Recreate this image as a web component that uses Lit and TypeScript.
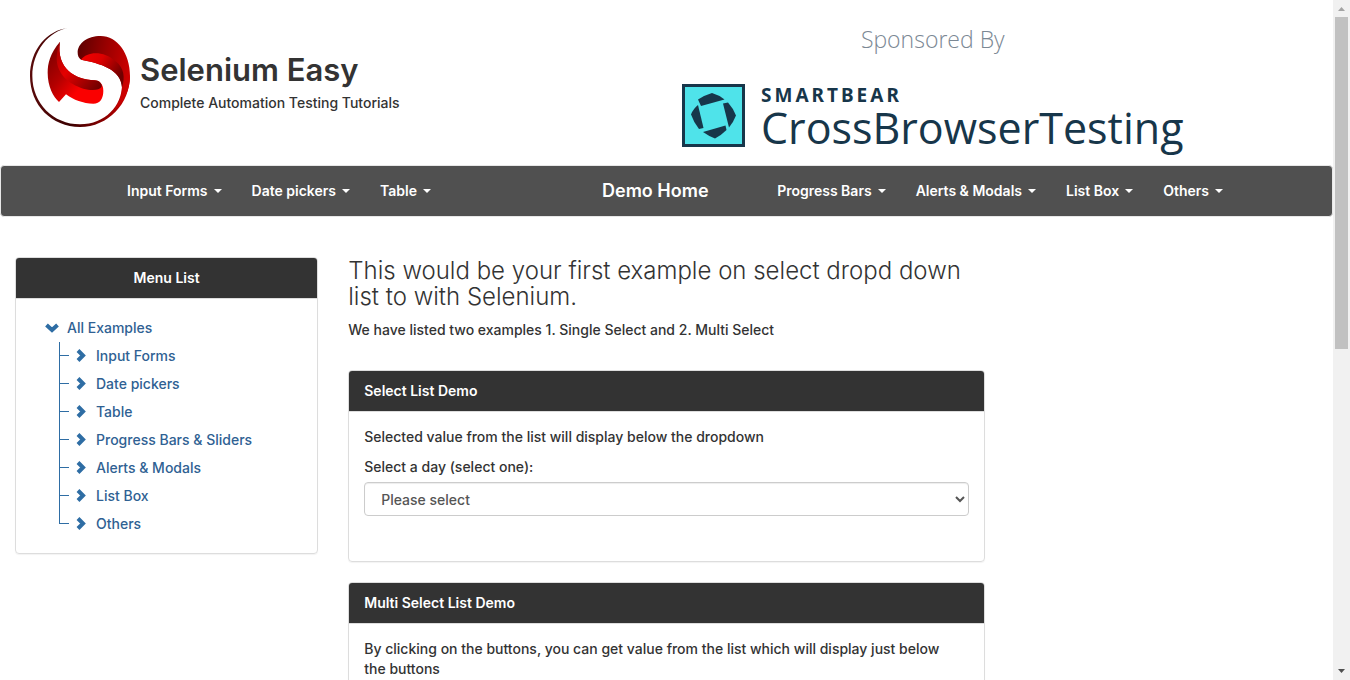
import { LitElement, html, css, svg } from "lit";
import { customElement, state } from "lit/decorators.js";

const NAV_LEFT = ["Input Forms", "Date pickers", "Table"];
const NAV_RIGHT = ["Progress Bars", "Alerts & Modals", "List Box", "Others"];
const TREE = [
  "Input Forms",
  "Date pickers",
  "Table",
  "Progress Bars & Sliders",
  "Alerts & Modals",
  "List Box",
  "Others",
];
const DAYS = ["Sunday", "Monday", "Tuesday", "Wednesday", "Thursday", "Friday", "Saturday"];

const seleniumLogo = html`
  <svg class="logo" viewBox="90 81 300 300" aria-hidden="true">
    <defs>
      <linearGradient id="ring" x1="0" y1="0" x2="1" y2="0">
        <stop offset="0" stop-color="#5a0a0a" />
        <stop offset="0.4" stop-color="#3a0000" />
        <stop offset="0.75" stop-color="#8c0000" />
        <stop offset="1" stop-color="#cf0000" />
      </linearGradient>
      <linearGradient id="cap" x1="0" y1="0.1" x2="1" y2="0.4">
        <stop offset="0" stop-color="#5c0000" />
        <stop offset="0.5" stop-color="#980000" />
        <stop offset="1" stop-color="#cc0000" />
      </linearGradient>
      <linearGradient id="fold" x1="0" y1="0" x2="1" y2="0.5">
        <stop offset="0" stop-color="#f40000" />
        <stop offset="0.45" stop-color="#dc0000" />
        <stop offset="1" stop-color="#700000" />
      </linearGradient>
      <linearGradient id="blade" x1="0" y1="0.2" x2="0.8" y2="0.9">
        <stop offset="0" stop-color="#800000" />
        <stop offset="0.4" stop-color="#b40000" />
        <stop offset="0.75" stop-color="#fa0000" />
      </linearGradient>
      <linearGradient id="inner" x1="0.1" y1="0.2" x2="1" y2="1">
        <stop offset="0" stop-color="#b80000" />
        <stop offset="0.3" stop-color="#e40000" />
        <stop offset="0.6" stop-color="#b00000" />
        <stop offset="1" stop-color="#640000" />
      </linearGradient>
    </defs>
    <path
      fill="url(#ring)"
      d="M207 83C140 90 90 150 90 228C90 315 155 381 240 381C325 381 390 310 390 228L366 255C366 316 316 373 240 373C160 373 97 310 97 228C97 155 145 92 207 83Z"
    />
    <path
      fill="url(#cap)"
      d="M243 179C236 173 233 167 233 158C233 130 262 108 302 108C352 108 390 160 390 228C390 268 372 308 342 330C356 310 366 290 366 262C364 208 300 190 243 179Z"
    />
    <path
      fill="url(#fold)"
      d="M243 179C262 153 312 152 347 184C372 204 376 232 366 262C364 208 300 190 243 179Z"
    />
    <path
      fill="url(#blade)"
      d="M180 125C150 160 143 190 143 218C143 260 160 290 177 306L198 283C220 300 250 311 280 311C300 311 310 295 310 272C310 252 298 241 284 241C225 238 168 205 180 125Z"
    />
    <path
      fill="url(#inner)"
      d="M180 125C168 205 225 238 284 241C298 241 307 252 305 260C298 271 275 272 250 266C205 252 172 222 170 178C170 158 174 142 180 125Z"
    />
  </svg>
`;

const sponsorMark = html`
  <svg class="mark" viewBox="0 0 63 63" aria-hidden="true">
    <rect x="1.5" y="1.5" width="60" height="60" fill="#4fe3ea" stroke="#17364a" stroke-width="3" />
    <g fill="#17364a">
      <path d="M16 15.500Q23 11 30 9Q37 11 42.500 15.500L19 22Z" />
      <path d="M41 19.500L46 18.500Q51 24 54 31.500Q51.500 38 47 43.500Z" />
      <path d="M43.500 41.500L44.500 46Q39 51.500 33 54.500Q26.500 52 21 48Z" />
      <path d="M16 21L21.500 44L17 45Q11.500 38 9 30.500Q11 25 16 21Z" />
    </g>
  </svg>
`;

const chevron = (dir: "down" | "right") => html`
  <svg class="chevron" viewBox="0 0 14 14" aria-hidden="true">
    ${dir === "down"
      ? svg`<path d="M1.500 4L7 9L12.500 4" />`
      : svg`<path d="M4 1.500L9 6.500L4 11.500" />`}
  </svg>
`;

@customElement("app-root")
export class AppRoot extends LitElement {
  @state() private day = "";

  static styles = css`
    :host {
      display: flex;
      height: 100vh;
      overflow: hidden;
      background: #fff;
      color: #333;
      font: 500 14px/20px Inter, sans-serif;
    }
    *,
    *::before,
    *::after {
      box-sizing: border-box;
    }
    a {
      text-decoration: none;
      color: inherit;
    }
    h1,
    h2,
    h3,
    p,
    ul {
      margin: 0;
      padding: 0;
    }
    ul {
      list-style: none;
    }

    .page {
      flex: 1;
      min-width: 0;
    }

    .top {
      display: grid;
      grid-template-columns: 1fr 1fr;
      height: 165px;
      padding: 26px 0 0 15px;
    }
    .brand {
      display: flex;
      gap: 10px;
      padding: 1px 0 0 15px;
    }
    .logo {
      width: 100px;
      height: 100px;
      flex: none;
    }
    .brand-text {
      padding-top: 24px;
    }
    .brand-text h1 {
      font-size: 31px;
      line-height: 38px;
      font-weight: 600;
    }
    .brand-text p {
      margin-top: 4px;
    }
    .sponsor {
      justify-self: start;
      display: flex;
      flex-direction: column;
      align-items: center;
      padding-left: 8px;
      color: #17364a;
      font-family: "Open Sans", sans-serif;
    }
    .sponsor-by {
      font-size: 23px;
      line-height: 26px;
      font-weight: 300;
      color: #7b8894;
    }
    .sponsor-logo {
      display: flex;
      gap: 16px;
      margin-top: 32px;
    }
    .mark {
      width: 63px;
      height: 63px;
      flex: none;
    }
    .sponsor-name {
      display: block;
    }
    .smartbear {
      display: block;
      font: 700 19px/22px "Noto Sans", sans-serif;
      letter-spacing: 3px;
    }
    .cbt {
      display: block;
      font-size: 43px;
      line-height: 44px;
    }

    .nav {
      display: grid;
      grid-template-columns: 490px 1fr auto;
      align-items: center;
      height: 52px;
      padding: 0 94px 0 111px;
      border: 1px solid #e7e7e7;
      border-radius: 4px;
      background: #505050;
      color: #fff;
      font-weight: 600;
    }
    .nav-group {
      display: flex;
    }
    .nav-link {
      display: flex;
      align-items: center;
      gap: 6px;
      padding: 15px;
      white-space: nowrap;
    }
    .caret {
      border: 4px solid transparent;
      border-top-color: currentColor;
      border-bottom: 0;
    }
    .nav-home {
      font-size: 18px;
    }

    .columns {
      display: grid;
      grid-template-columns: 1fr 2fr 1fr;
      margin-top: 40px;
    }
    .side,
    .main {
      padding: 0 15px;
    }
    .panel {
      margin-bottom: 20px;
      border: 1px solid #ddd;
      border-radius: 4px;
      box-shadow: 0 1px 1px rgba(0, 0, 0, 0.05);
      overflow: hidden;
    }
    .panel-head {
      padding: 10px 15px;
      border-bottom: 1px solid #ddd;
      background: #333;
      background-clip: padding-box;
      color: #fff;
      font-size: 14px;
      line-height: 20px;
      font-weight: 600;
    }
    .side .panel-head {
      text-align: center;
    }
    .panel-body {
      padding: 15px;
    }
    .panel-body p {
      padding-right: 15px;
    }

    .tree {
      color: #2f6193;
    }
    .tree a {
      display: flex;
      align-items: center;
      gap: 8px;
      height: 28px;
    }
    .root {
      padding-left: 14px;
    }
    .chevron {
      width: 14px;
      height: 14px;
      fill: none;
      stroke: #2e6da4;
      stroke-width: 4;
    }
    .children {
      padding-left: 28px;
    }
    .node {
      display: flex;
    }
    .branch {
      display: flex;
      flex-direction: column;
      width: 10px;
      margin-right: 5px;
    }
    .branch::before {
      content: "";
      height: 14px;
      border-left: 1px solid #2e6da4;
      border-bottom: 1px solid #2e6da4;
    }
    .branch::after {
      content: "";
      flex: 1;
      border-left: 1px solid #2e6da4;
    }
    .node:last-child .branch::after {
      border-left: 0;
    }

    .intro {
      padding-top: 1px;
      font-size: 24px;
      line-height: 26px;
      font-weight: 300;
    }
    .lead {
      margin: 10px 0 30px;
    }
    .field {
      display: flex;
      flex-direction: column;
      gap: 5px;
      margin: 10px 0 30px;
    }
    .select {
      width: 100%;
      height: 34px;
      padding: 6px 12px;
      border: 1px solid #ccc;
      border-radius: 4px;
      background: #fff;
      box-shadow: inset 0 1px 1px rgba(0, 0, 0, 0.075);
      color: #555;
      font: inherit;
    }

    .scrollbar {
      display: flex;
      flex-direction: column;
      align-items: center;
      justify-content: space-between;
      width: 17px;
      background: #f1f1f1;
    }
    .arrow {
      width: 17px;
      height: 17px;
    }
    .rail {
      flex: 1;
      width: 13px;
    }
    .thumb {
      height: 51.4%;
      background: #c1c1c1;
    }
  `;

  private navLink(label: string) {
    return html`<a class="nav-link" href="#">${label}<span class="caret"></span></a>`;
  }

  private pick(e: Event) {
    this.day = (e.target as HTMLSelectElement).value;
  }

  render() {
    return html`
      <div class="page">
        <header class="top">
          <a class="brand" href="#">
            ${seleniumLogo}
            <div class="brand-text">
              <h1>Selenium Easy</h1>
              <p>Complete Automation Testing Tutorials</p>
            </div>
          </a>
          <a class="sponsor" href="#">
            <span class="sponsor-by">Sponsored By</span>
            <span class="sponsor-logo">
              ${sponsorMark}
              <span class="sponsor-name">
                <span class="smartbear">SMARTBEAR</span>
                <span class="cbt">CrossBrowserTesting</span>
              </span>
            </span>
          </a>
        </header>

        <nav class="nav">
          <div class="nav-group">${NAV_LEFT.map((l) => this.navLink(l))}</div>
          <a class="nav-home" href="#">Demo Home</a>
          <div class="nav-group">${NAV_RIGHT.map((l) => this.navLink(l))}</div>
        </nav>

        <div class="columns">
          <aside class="side">
            <section class="panel">
              <h2 class="panel-head">Menu List</h2>
              <div class="panel-body tree">
                <a class="root" href="#">${chevron("down")}All Examples</a>
                <ul class="children">
                  ${TREE.map(
                    (t) => html`<li class="node">
                      <span class="branch"></span>
                      <a href="#">${chevron("right")}${t}</a>
                    </li>`
                  )}
                </ul>
              </div>
            </section>
          </aside>

          <main class="main">
            <h3 class="intro">This would be your first example on select dropd down list to with Selenium.</h3>
            <p class="lead">We have listed two examples 1. Single Select and 2. Multi Select</p>

            <section class="panel">
              <h2 class="panel-head">Select List Demo</h2>
              <div class="panel-body">
                <p>Selected value from the list will display below the dropdown</p>
                <div class="field">
                  <label for="day">Select a day (select one):</label>
                  <select id="day" class="select" .value=${this.day} @change=${this.pick}>
                    <option value="">Please select</option>
                    ${DAYS.map((d) => html`<option value=${d}>${d}</option>`)}
                  </select>
                </div>
              </div>
            </section>

            <section class="panel">
              <h2 class="panel-head">Multi Select List Demo</h2>
              <div class="panel-body">
                <p>By clicking on the buttons, you can get value from the list which will display just below the buttons</p>
              </div>
            </section>
          </main>
        </div>
      </div>

      <div class="scrollbar" aria-hidden="true">
        <svg class="arrow" viewBox="0 0 17 17"><path fill="#a3a3a3" d="M5 11L8.500 7L12 11Z" /></svg>
        <div class="rail"><div class="thumb"></div></div>
        <svg class="arrow" viewBox="0 0 17 17"><path fill="#505050" d="M5 6L8.500 10L12 6Z" /></svg>
      </div>
    `;
  }
}
